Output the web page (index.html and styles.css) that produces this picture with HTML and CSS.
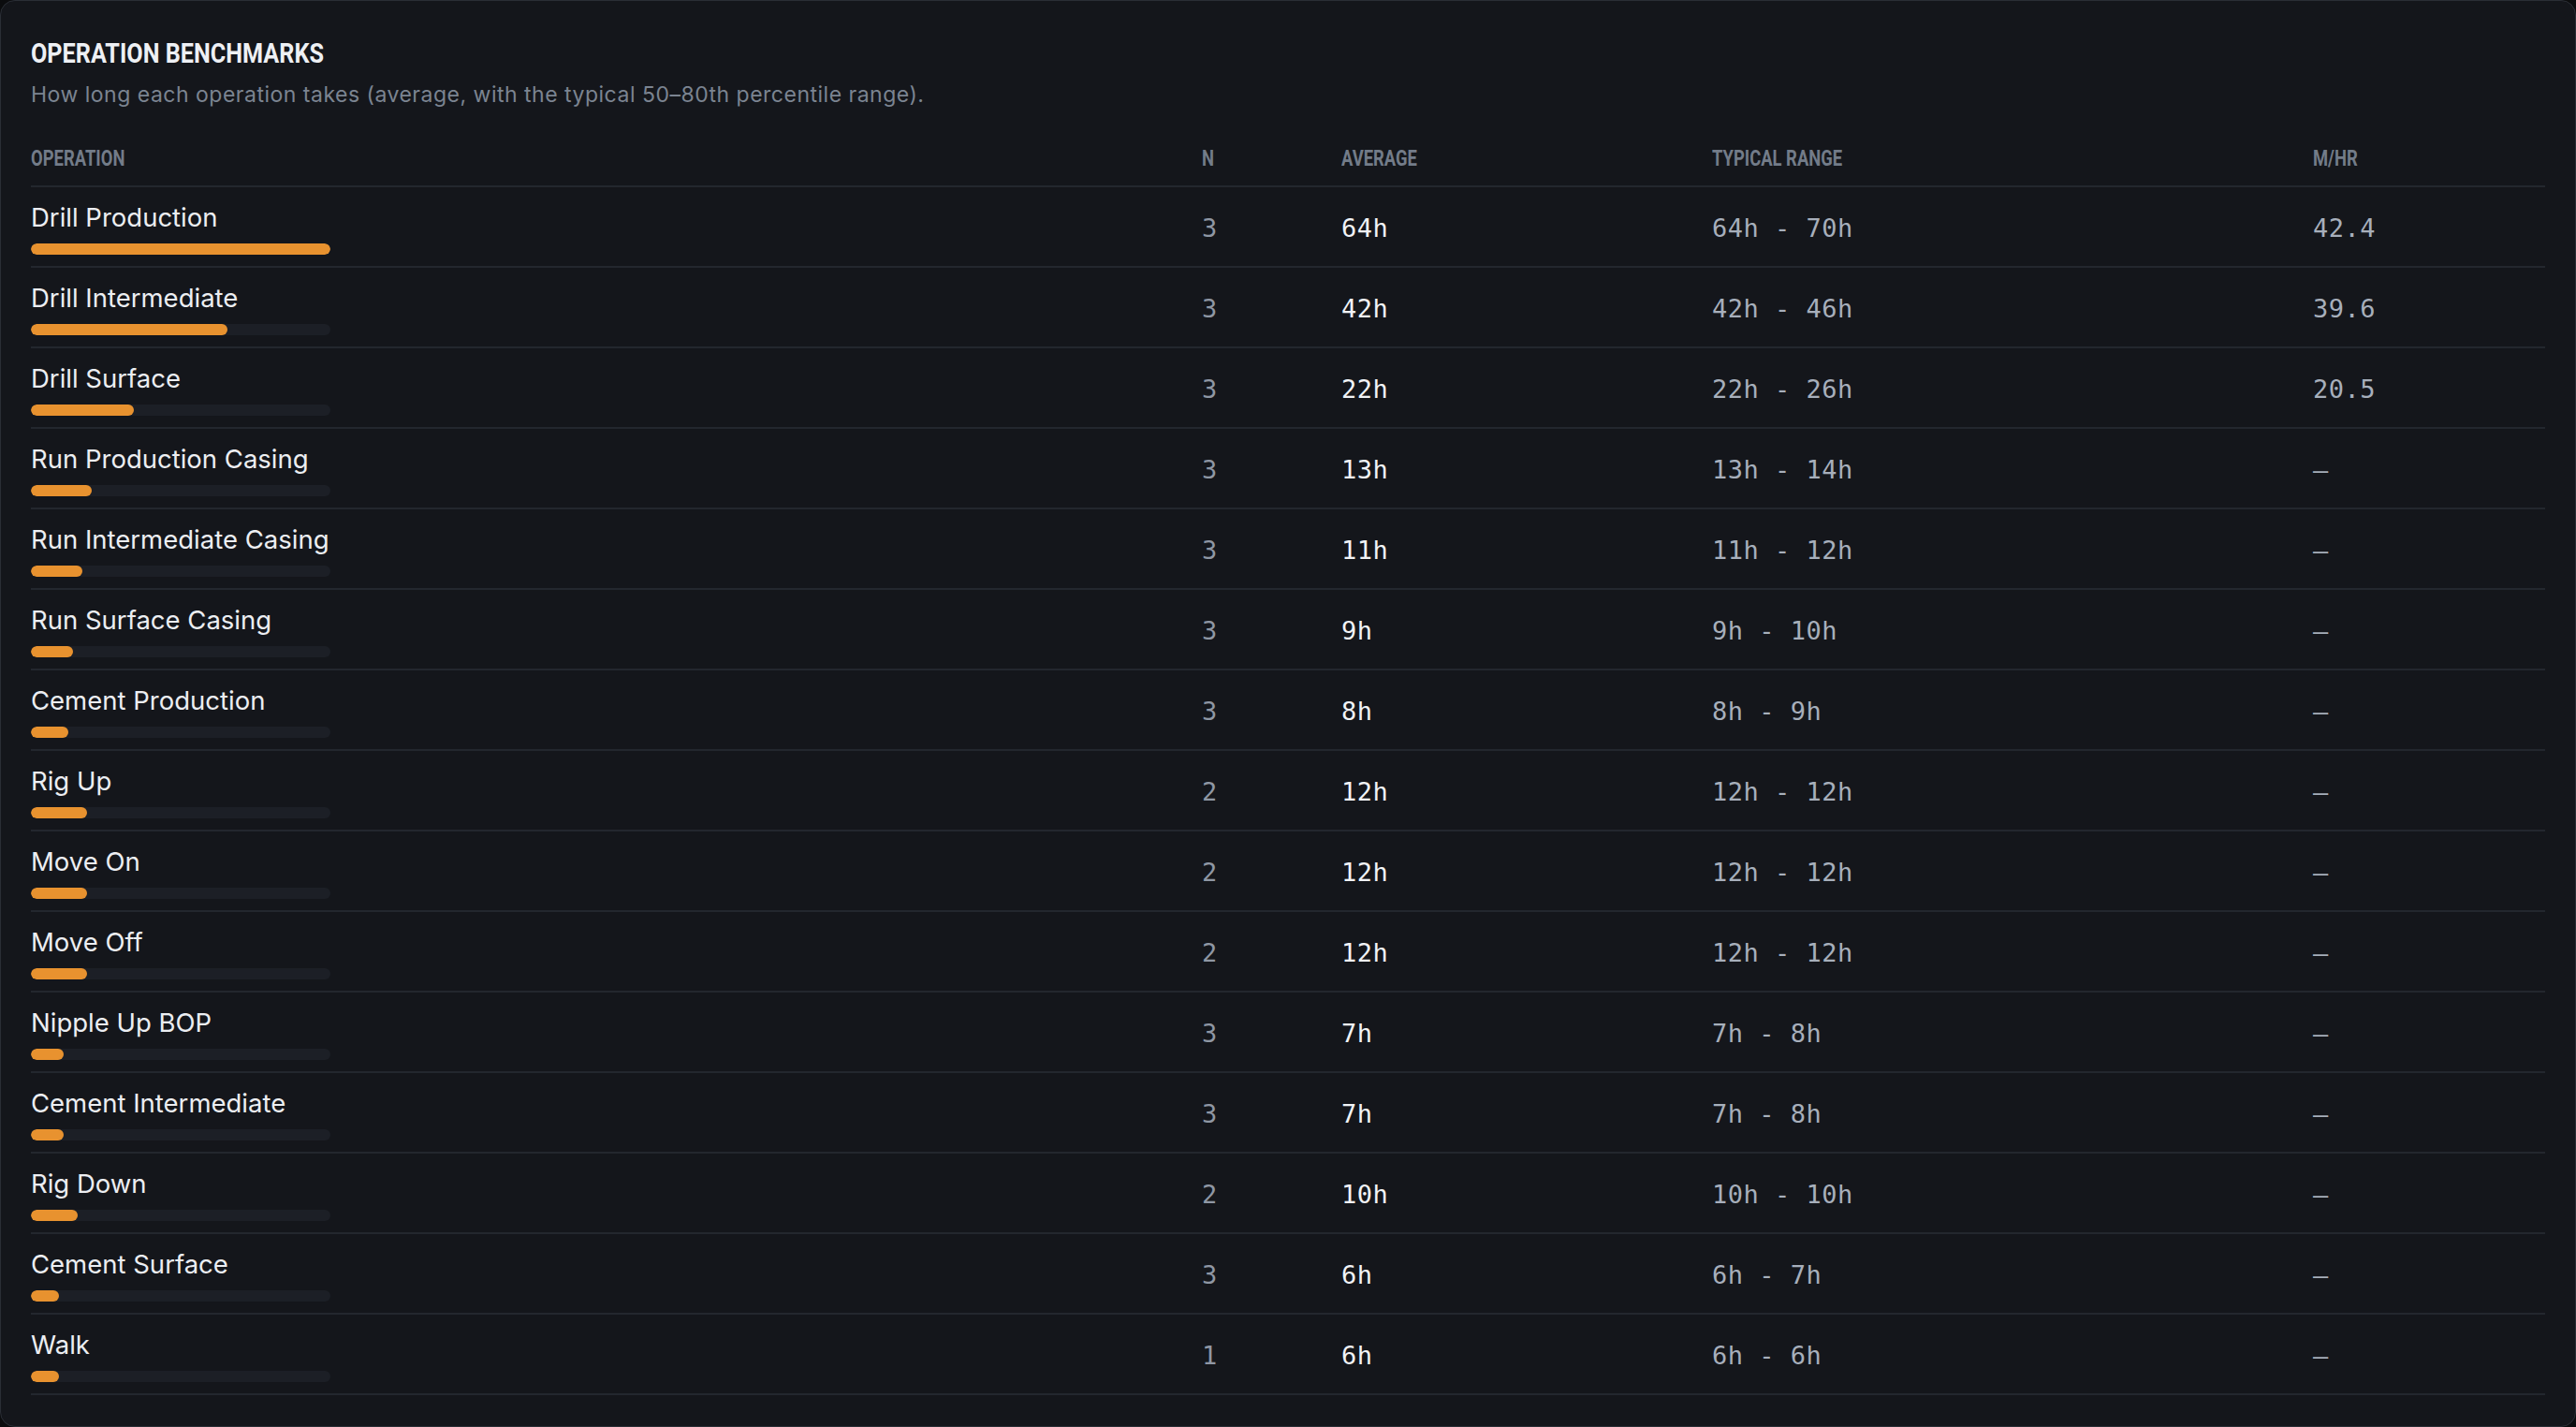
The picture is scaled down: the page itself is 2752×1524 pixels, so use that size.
FILE: index.html
```html
<!DOCTYPE html>
<html lang="en">
<head>
<meta charset="utf-8">
<title>Operation Benchmarks</title>
<link rel="stylesheet" href="styles.css">
</head>
<body>
<section class="card">
  <h2 class="title"><span class="cond">OPERATION BENCHMARKS</span></h2>
  <p class="subtitle">How long each operation takes (average, with the typical 50–80th percentile range).</p>
  <div class="table">
    <div class="row head">
      <div class="th"><span class="cond">OPERATION</span></div>
      <div class="th"><span class="cond">N</span></div>
      <div class="th"><span class="cond">AVERAGE</span></div>
      <div class="th"><span class="cond">TYPICAL RANGE</span></div>
      <div class="th"><span class="cond">M/HR</span></div>
    </div>

    <div class="row">
      <div class="op"><div class="name">Drill Production</div><div class="track"><div class="fill" style="width:100%"></div></div></div>
      <div class="n">3</div><div class="avg">64h</div><div class="rng">64h - 70h</div><div class="mhr">42.4</div>
    </div>
    <div class="row">
      <div class="op"><div class="name">Drill Intermediate</div><div class="track"><div class="fill" style="width:65.6%"></div></div></div>
      <div class="n">3</div><div class="avg">42h</div><div class="rng">42h - 46h</div><div class="mhr">39.6</div>
    </div>
    <div class="row">
      <div class="op"><div class="name">Drill Surface</div><div class="track"><div class="fill" style="width:34.4%"></div></div></div>
      <div class="n">3</div><div class="avg">22h</div><div class="rng">22h - 26h</div><div class="mhr">20.5</div>
    </div>
    <div class="row">
      <div class="op"><div class="name">Run Production Casing</div><div class="track"><div class="fill" style="width:20.3%"></div></div></div>
      <div class="n">3</div><div class="avg">13h</div><div class="rng">13h - 14h</div><div class="mhr">—</div>
    </div>
    <div class="row">
      <div class="op"><div class="name">Run Intermediate Casing</div><div class="track"><div class="fill" style="width:17.2%"></div></div></div>
      <div class="n">3</div><div class="avg">11h</div><div class="rng">11h - 12h</div><div class="mhr">—</div>
    </div>
    <div class="row">
      <div class="op"><div class="name">Run Surface Casing</div><div class="track"><div class="fill" style="width:14.1%"></div></div></div>
      <div class="n">3</div><div class="avg">9h</div><div class="rng">9h - 10h</div><div class="mhr">—</div>
    </div>
    <div class="row">
      <div class="op"><div class="name">Cement Production</div><div class="track"><div class="fill" style="width:12.5%"></div></div></div>
      <div class="n">3</div><div class="avg">8h</div><div class="rng">8h - 9h</div><div class="mhr">—</div>
    </div>
    <div class="row">
      <div class="op"><div class="name">Rig Up</div><div class="track"><div class="fill" style="width:18.75%"></div></div></div>
      <div class="n">2</div><div class="avg">12h</div><div class="rng">12h - 12h</div><div class="mhr">—</div>
    </div>
    <div class="row">
      <div class="op"><div class="name">Move On</div><div class="track"><div class="fill" style="width:18.75%"></div></div></div>
      <div class="n">2</div><div class="avg">12h</div><div class="rng">12h - 12h</div><div class="mhr">—</div>
    </div>
    <div class="row">
      <div class="op"><div class="name">Move Off</div><div class="track"><div class="fill" style="width:18.75%"></div></div></div>
      <div class="n">2</div><div class="avg">12h</div><div class="rng">12h - 12h</div><div class="mhr">—</div>
    </div>
    <div class="row">
      <div class="op"><div class="name">Nipple Up BOP</div><div class="track"><div class="fill" style="width:10.9%"></div></div></div>
      <div class="n">3</div><div class="avg">7h</div><div class="rng">7h - 8h</div><div class="mhr">—</div>
    </div>
    <div class="row">
      <div class="op"><div class="name">Cement Intermediate</div><div class="track"><div class="fill" style="width:10.9%"></div></div></div>
      <div class="n">3</div><div class="avg">7h</div><div class="rng">7h - 8h</div><div class="mhr">—</div>
    </div>
    <div class="row">
      <div class="op"><div class="name">Rig Down</div><div class="track"><div class="fill" style="width:15.6%"></div></div></div>
      <div class="n">2</div><div class="avg">10h</div><div class="rng">10h - 10h</div><div class="mhr">—</div>
    </div>
    <div class="row">
      <div class="op"><div class="name">Cement Surface</div><div class="track"><div class="fill" style="width:9.4%"></div></div></div>
      <div class="n">3</div><div class="avg">6h</div><div class="rng">6h - 7h</div><div class="mhr">—</div>
    </div>
    <div class="row">
      <div class="op"><div class="name">Walk</div><div class="track"><div class="fill" style="width:9.4%"></div></div></div>
      <div class="n">1</div><div class="avg">6h</div><div class="rng">6h - 6h</div><div class="mhr">—</div>
    </div>
  </div>
</section>
</body>
</html>
```

FILE: styles.css
```css
* { box-sizing: border-box; }
html, body { margin: 0; padding: 0; }
body {
  background: #0b0c0e;
  width: 2752px;
  height: 1524px;
  font-family: "Inter", "Noto Sans", sans-serif;
  color: #eceef2;
}
.card {
  width: 2752px;
  height: 1524px;
  background: #14161b;
  border: 1px solid #2a2e35;
  border-radius: 16px;
  padding: 37px 32px 0;
}
.cond {
  display: inline-block;
  font-family: "Roboto", "Liberation Sans", sans-serif;
  font-weight: 700;
  transform-origin: left center;
  white-space: nowrap;
}
.title {
  margin: 0;
  font-size: 30px;
  line-height: 36px;
  color: #eef0f4;
}
.title .cond { transform: scaleX(0.84); }
.subtitle {
  margin: 10px 0 0;
  font-size: 23px;
  line-height: 32px;
  letter-spacing: 0.5px;
  color: #7b8491;
}
.table { margin-top: 38px; }
.row {
  display: grid;
  grid-template-columns: 1251px 149px 396px 642px 1fr;
  align-items: center;
  border-bottom: 2px solid #23272e;
  padding: 16px 0 12px;
}
.row.head {
  padding: 0 0 14px;
}
.th {
  font-size: 23px;
  line-height: 28px;
  color: #737c89;
}
.th .cond { transform: scaleX(0.8); }
.name {
  font-size: 27.5px;
  line-height: 32px;
  color: #eceef2;
}
.track {
  margin-top: 12px;
  width: 320px;
  height: 12px;
  border-radius: 6px;
  background: #1c1f26;
  overflow: hidden;
}
.fill {
  height: 100%;
  border-radius: 6px;
  background: #e8922f;
}
.n, .avg, .rng, .mhr {
  font-family: "DejaVu Sans Mono", "Liberation Mono", monospace;
  font-size: 27px;
  line-height: 32px;
  letter-spacing: 0.5px;
}
.n { color: #8f97a4; }
.avg { color: #f1f3f6; font-weight: 500; }
.rng, .mhr { color: #a7afbb; }
```
